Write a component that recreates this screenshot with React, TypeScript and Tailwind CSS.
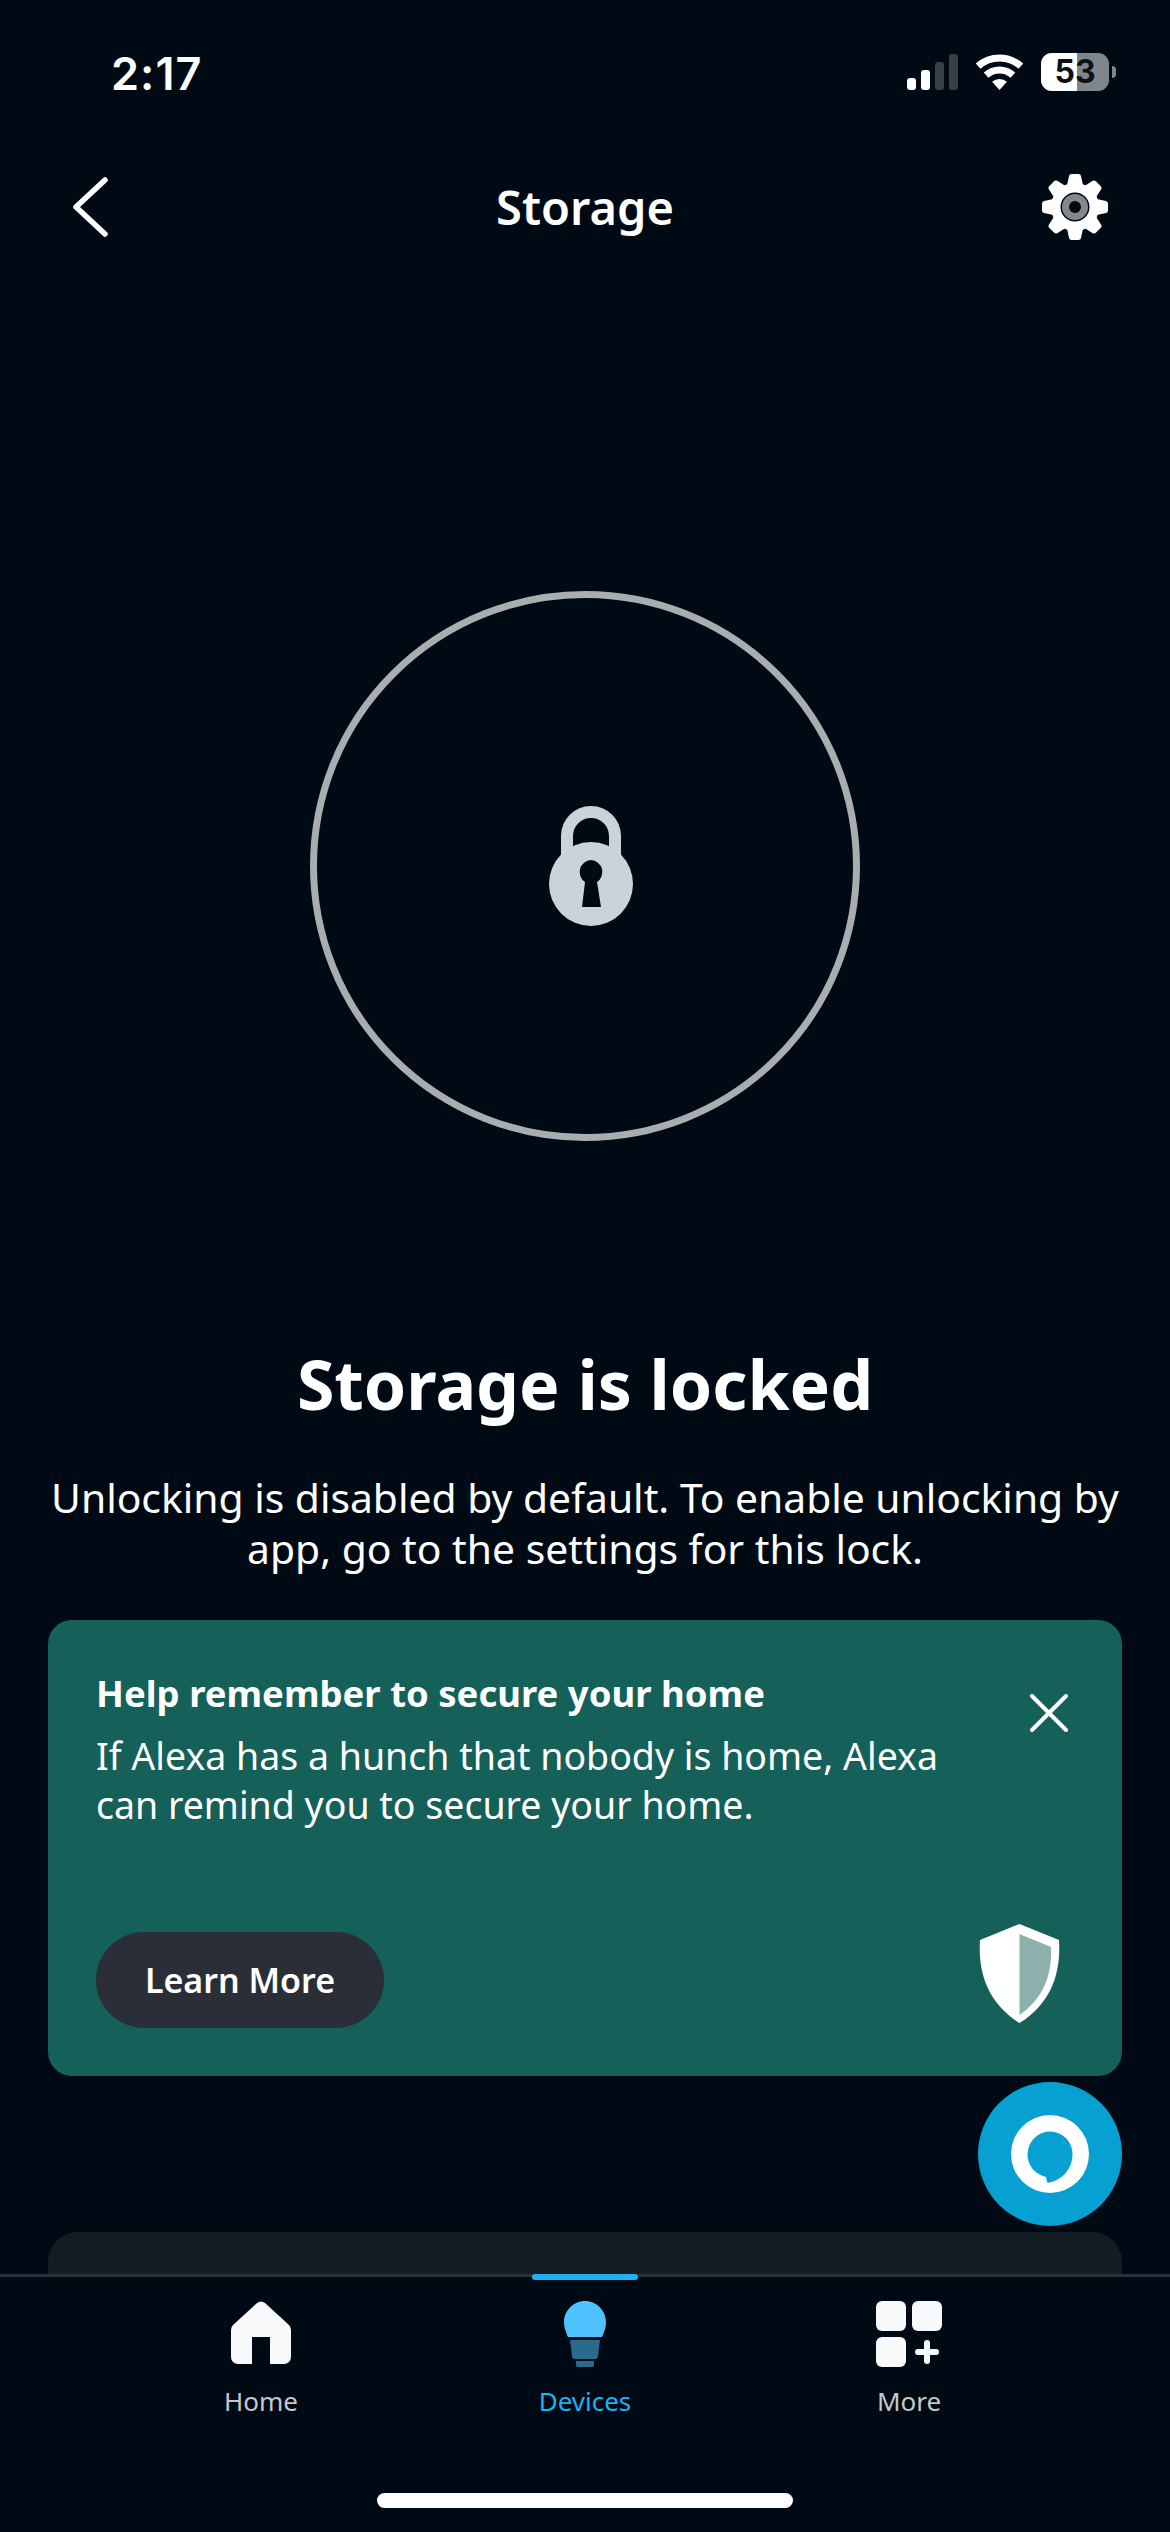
const font = { fontFamily: '"Noto Sans", sans-serif' };

function StatusBar() {
  return (
    <div className="flex h-[150px] shrink-0 items-start justify-between pl-[111px] pr-[54px] pt-[44px]">
      <span className="text-[45px] leading-[60px] font-semibold tracking-[1px] text-white [font-family:Inter,sans-serif]">
        2:17
      </span>
      <div className="flex items-center gap-[17px] pt-[9px]">
        {/* signal */}
        <svg width="51" height="36" viewBox="0 0 51 36">
          <rect x="0" y="24" width="9" height="12" rx="3" fill="#fff" />
          <rect x="14" y="16" width="9" height="20" rx="3" fill="#fff" />
          <rect x="28" y="8" width="9" height="28" rx="3" fill="#3a3f45" />
          <rect x="42" y="0" width="9" height="36" rx="3" fill="#3a3f45" />
        </svg>
        {/* wifi */}
        <svg width="49" height="36" viewBox="0 0 49 36">
          <path d="M3.100 12.200A32 32 0 0 1 45.900 12.200" fill="none" stroke="#fff" strokeWidth="7" />
          <path d="M11.100 21.100A20 20 0 0 1 37.900 21.100" fill="none" stroke="#fff" strokeWidth="7" />
          <path d="M17.100 27.800A11 11 0 0 1 31.900 27.800L24.500 36z" fill="#fff" />
        </svg>
        {/* battery */}
        <div className="relative flex items-center">
          <div className="relative flex h-[38px] w-[68px] items-center justify-center rounded-[11px] bg-[#80868a]">
            <div className="absolute inset-y-0 left-0 w-[36px] rounded-l-[11px] bg-white" />
            <span className="relative text-[32px] leading-[38px] font-bold text-[#0b1218] [font-family:Inter,sans-serif]">
              53
            </span>
          </div>
          <div className="ml-[3px] h-[12px] w-[4px] rounded-r-full bg-[#80868a]" />
        </div>
      </div>
    </div>
  );
}

function Gear() {
  const teeth = [0, 45, 90, 135, 180, 225, 270, 315];
  return (
    <svg width="66" height="66" viewBox="0 0 66 66">
      {teeth.map((deg) => (
        <path
          key={deg}
          d="M24 16 27 2Q27.500 0 29.500 0H36.500Q38.500 0 39 2L42 16z"
          fill="#fff"
          transform={`rotate(${deg} 33 33)`}
        />
      ))}
      <circle cx="33" cy="33" r="24" fill="#fff" />
      <circle cx="33" cy="33" r="14.500" fill="#000a14" />
      <circle cx="33" cy="33" r="13" fill="#84888c" />
      <circle cx="33" cy="33" r="6" fill="#000a14" />
    </svg>
  );
}

function Lock() {
  return (
    <svg width="84" height="120" viewBox="0 0 84 120" className="ml-[12px]">
      <path d="M18 50V30a24 24 0 0 1 48 0v20" fill="none" stroke="#cbd2d9" strokeWidth="12" />
      <circle cx="42" cy="78" r="42" fill="#cbd2d9" />
      <path d="M42 54a12 12 0 0 1 6 22l4 25H33l3-25a12 12 0 0 1 6-22z" fill="#000a14" />
    </svg>
  );
}

function Shield() {
  return (
    <svg width="81" height="99" viewBox="0 0 81 99">
      <path d="M40.500 0 80 16c2 30-6 62-39.500 83C7 78-1 46 1 16z" fill="#fff" />
      <path d="M40.500 10 72 23c1 26-6 50-31.500 68z" fill="#8cb0ac" />
    </svg>
  );
}

function AlexaRing() {
  return (
    <svg width="78" height="78" viewBox="0 0 78 78">
      <path
        d="M39 0a39 39 0 1 1 0 78a39 39 0 0 1 0-78zM39 16.500a23 23 0 0 0-16 39c3 3 7 5 12 6.500l1.500 6c16-3 25-15 25-29a22.500 22.500 0 0 0-22.500-22.500z"
        fill="#fff"
        fillRule="evenodd"
      />
    </svg>
  );
}

function NavItem({ label, active, children }: { label: string; active?: boolean; children: React.ReactNode }) {
  return (
    <div className="flex w-[200px] flex-col items-center">
      <div className="flex h-[66px] items-start justify-center">{children}</div>
      <span className={`mt-[16px] text-[26px] leading-[37px] ${active ? "text-[#1fb1f2]" : "text-[#c6c8ca]"}`}>
        {label}
      </span>
    </div>
  );
}

export default function App() {
  return (
    <div style={font} className="relative flex h-[2532px] w-[1170px] flex-col overflow-hidden bg-[#000a14] text-white">
      <StatusBar />

      {/* Header */}
      <div className="grid h-[114px] shrink-0 grid-cols-[1fr_auto_1fr] items-center px-[62px]">
        <svg width="36" height="60" viewBox="0 0 36 60" className="ml-[10px]">
          <path d="M33 3 4 30l29 27" fill="none" stroke="#fff" strokeWidth="5.500" strokeLinecap="round" strokeLinejoin="round" />
        </svg>
        <h1 className="text-[47px] leading-[60px] font-semibold">Storage</h1>
        <div className="justify-self-end">
          <Gear />
        </div>
      </div>

      {/* Lock circle */}
      <div className="mt-[327px] flex h-[550px] w-[550px] shrink-0 items-center justify-center self-center rounded-full border-[7px] border-[#a9adb0]">
        <Lock />
      </div>

      <h2 className="mt-[199px] text-center text-[68px] leading-[88px] font-bold">Storage is locked</h2>
      <p className="mt-[44px] px-[40px] text-center text-[40.800px] leading-[51px]">
        Unlocking is disabled by default. To enable unlocking by app, go to the settings for this lock.
      </p>

      {/* Reminder card */}
      <div className="relative mx-[48px] mt-[46px] h-[456px] shrink-0 rounded-[24px] bg-[#156059] px-[48px] pt-[48px]">
        <h3 className="text-[36.500px] leading-[50px] font-bold">Help remember to secure your home</h3>
        <p className="mt-[13px] w-[880px] text-[37.500px] leading-[49px]">
          If Alexa has a hunch that nobody is home, Alexa can remind you to secure your home.
        </p>
        <svg width="38" height="38" viewBox="0 0 38 38" className="absolute top-[74px] right-[54px]">
          <path d="M2 2l34 34M36 2 2 36" fill="none" stroke="#fff" strokeWidth="4" strokeLinecap="round" />
        </svg>
        <div className="absolute inset-x-[48px] bottom-[48px] flex items-end justify-between">
          <button className="h-[96px] w-[288px] rounded-full bg-[#2a2e36] text-[34px] font-semibold text-white">
            Learn More
          </button>
          <div className="mr-[14px] mb-[5px]">
            <Shield />
          </div>
        </div>
      </div>

      {/* Next card, cut off by the tab bar */}
      <div className="mx-[48px] mt-[156px] flex-1 rounded-t-[30px] bg-[#141d24]" />

      {/* Tab bar */}
      <div className="relative h-[258px] shrink-0 border-t-[3px] border-[#2c3138] bg-[#000a14]">
        <div className="absolute top-[-3px] left-[532px] h-[6px] w-[106px] rounded-full bg-[#1fb1f5]" />
        <div className="flex justify-between px-[161px] pt-[24px]">
          <NavItem label="Home">
            <svg width="60" height="63" viewBox="0 0 60 63">
              <path d="M26 2Q30-1 34 2L58 24Q60 26 60 29V56a7 7 0 0 1-7 7H39V36H21V63H7a7 7 0 0 1-7-7V29Q0 26 2 24z" fill="#f8f9fb" />
            </svg>
          </NavItem>
          <NavItem label="Devices" active>
            <svg width="42" height="66" viewBox="0 0 42 66">
              <path d="M21 0c12 0 21 10 21 21 0 6-2 10-4 15H4C2 31 0 27 0 21 0 10 9 0 21 0z" fill="#4fc3ff" />
              <path d="M6 39h30l-2 16a3 3 0 0 1-3 3H11a3 3 0 0 1-3-3z" fill="#2a6a8c" />
              <path d="M12 60h18v4a2 2 0 0 1-2 2H14a2 2 0 0 1-2-2z" fill="#2a6a8c" />
            </svg>
          </NavItem>
          <NavItem label="More">
            <svg width="66" height="66" viewBox="0 0 66 66">
              <rect x="0" y="0" width="30" height="30" rx="6" fill="#f8f9fb" />
              <rect x="36" y="0" width="30" height="30" rx="6" fill="#f8f9fb" />
              <rect x="0" y="36" width="30" height="30" rx="6" fill="#f8f9fb" />
              <rect x="39" y="48" width="24" height="6" rx="3" fill="#f8f9fb" />
              <rect x="48" y="39" width="6" height="24" rx="3" fill="#f8f9fb" />
            </svg>
          </NavItem>
        </div>
        <div className="absolute top-[216px] left-[377px] h-[15px] w-[416px] rounded-full bg-white" />
      </div>

      {/* Alexa button */}
      <div className="absolute top-[2082px] left-[978px] flex h-[144px] w-[144px] items-center justify-center rounded-full bg-[#07a0d3]">
        <AlexaRing />
      </div>
    </div>
  );
}
